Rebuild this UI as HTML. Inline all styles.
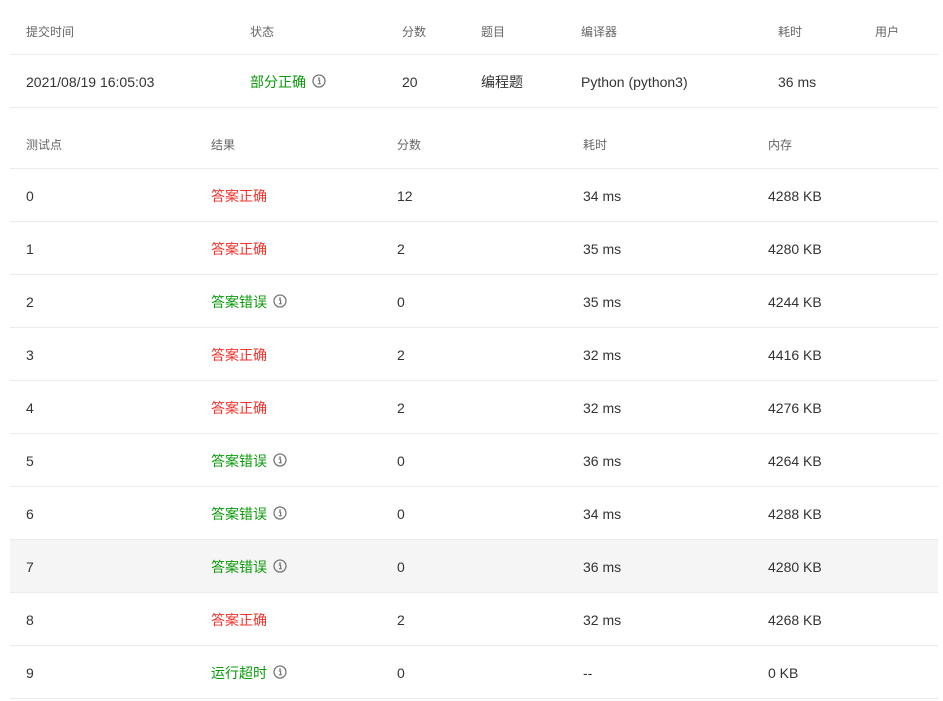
<!DOCTYPE html>
<html><head><meta charset="utf-8"><style>
body{margin:0;background:#fff;font-family:"Liberation Sans","Noto Sans CJK SC",sans-serif;color:#333;}
.t{position:absolute;left:10px;width:928px;}
.r{position:relative;height:53px;border-bottom:1px solid #ebebeb;box-sizing:border-box;}
.r span{position:absolute;top:1px;line-height:53px;font-size:14px;white-space:nowrap}
.h span{font-size:12px;color:#666}
.g{color:#0a9a0a}.red{color:#f5312b}
svg.i{width:14px;height:14px;vertical-align:-1px;margin-left:6px}
</style></head><body>
<svg width="0" height="0" style="position:absolute"><symbol id="ic" viewBox="0 0 14 14"><circle cx="7" cy="7" r="6" fill="none" stroke="#777" stroke-width="1.3"/><circle cx="7" cy="4.2" r="0.9" fill="#777"/><path d="M5.8 6h1.8v3.8h1M5.8 9.8h3" fill="none" stroke="#777" stroke-width="1.2"/></symbol></svg>
<div class="t" style="top:0">
<div class="r h" style="height:55px"><span style="left:16px;line-height:62px">提交时间</span><span style="left:240px;line-height:62px">状态</span><span style="left:392px;line-height:62px">分数</span><span style="left:471px;line-height:62px">题目</span><span style="left:571px;line-height:62px">编译器</span><span style="left:768px;line-height:62px">耗时</span><span style="left:865px;line-height:62px">用户</span></div>
<div class="r"><span style="left:16px">2021/08/19 16:05:03</span><span style="left:240px" class="g">部分正确<svg class="i"><use href="#ic"/></svg></span><span style="left:392px">20</span><span style="left:471px">编程题</span><span style="left:571px">Python (python3)</span><span style="left:768px">36 ms</span></div>
</div>
<div class="t" style="top:116px">
<div class="r h"><span style="left:16px;line-height:57px">测试点</span><span style="left:201px;line-height:57px">结果</span><span style="left:387px;line-height:57px">分数</span><span style="left:573px;line-height:57px">耗时</span><span style="left:758px;line-height:57px">内存</span></div>
<div class="r"><span style="left:16px">0</span><span style="left:201px" class="red">答案正确</span><span style="left:387px">12</span><span style="left:573px">34 ms</span><span style="left:758px">4288 KB</span></div>
<div class="r"><span style="left:16px">1</span><span style="left:201px" class="red">答案正确</span><span style="left:387px">2</span><span style="left:573px">35 ms</span><span style="left:758px">4280 KB</span></div>
<div class="r"><span style="left:16px">2</span><span style="left:201px" class="g">答案错误<svg class="i"><use href="#ic"/></svg></span><span style="left:387px">0</span><span style="left:573px">35 ms</span><span style="left:758px">4244 KB</span></div>
<div class="r"><span style="left:16px">3</span><span style="left:201px" class="red">答案正确</span><span style="left:387px">2</span><span style="left:573px">32 ms</span><span style="left:758px">4416 KB</span></div>
<div class="r"><span style="left:16px">4</span><span style="left:201px" class="red">答案正确</span><span style="left:387px">2</span><span style="left:573px">32 ms</span><span style="left:758px">4276 KB</span></div>
<div class="r"><span style="left:16px">5</span><span style="left:201px" class="g">答案错误<svg class="i"><use href="#ic"/></svg></span><span style="left:387px">0</span><span style="left:573px">36 ms</span><span style="left:758px">4264 KB</span></div>
<div class="r"><span style="left:16px">6</span><span style="left:201px" class="g">答案错误<svg class="i"><use href="#ic"/></svg></span><span style="left:387px">0</span><span style="left:573px">34 ms</span><span style="left:758px">4288 KB</span></div>
<div class="r" style="background:#f5f5f5"><span style="left:16px">7</span><span style="left:201px" class="g">答案错误<svg class="i"><use href="#ic"/></svg></span><span style="left:387px">0</span><span style="left:573px">36 ms</span><span style="left:758px">4280 KB</span></div>
<div class="r"><span style="left:16px">8</span><span style="left:201px" class="red">答案正确</span><span style="left:387px">2</span><span style="left:573px">32 ms</span><span style="left:758px">4268 KB</span></div>
<div class="r"><span style="left:16px">9</span><span style="left:201px" class="g">运行超时<svg class="i"><use href="#ic"/></svg></span><span style="left:387px">0</span><span style="left:573px">--</span><span style="left:758px">0 KB</span></div>
</div>
</body></html>
